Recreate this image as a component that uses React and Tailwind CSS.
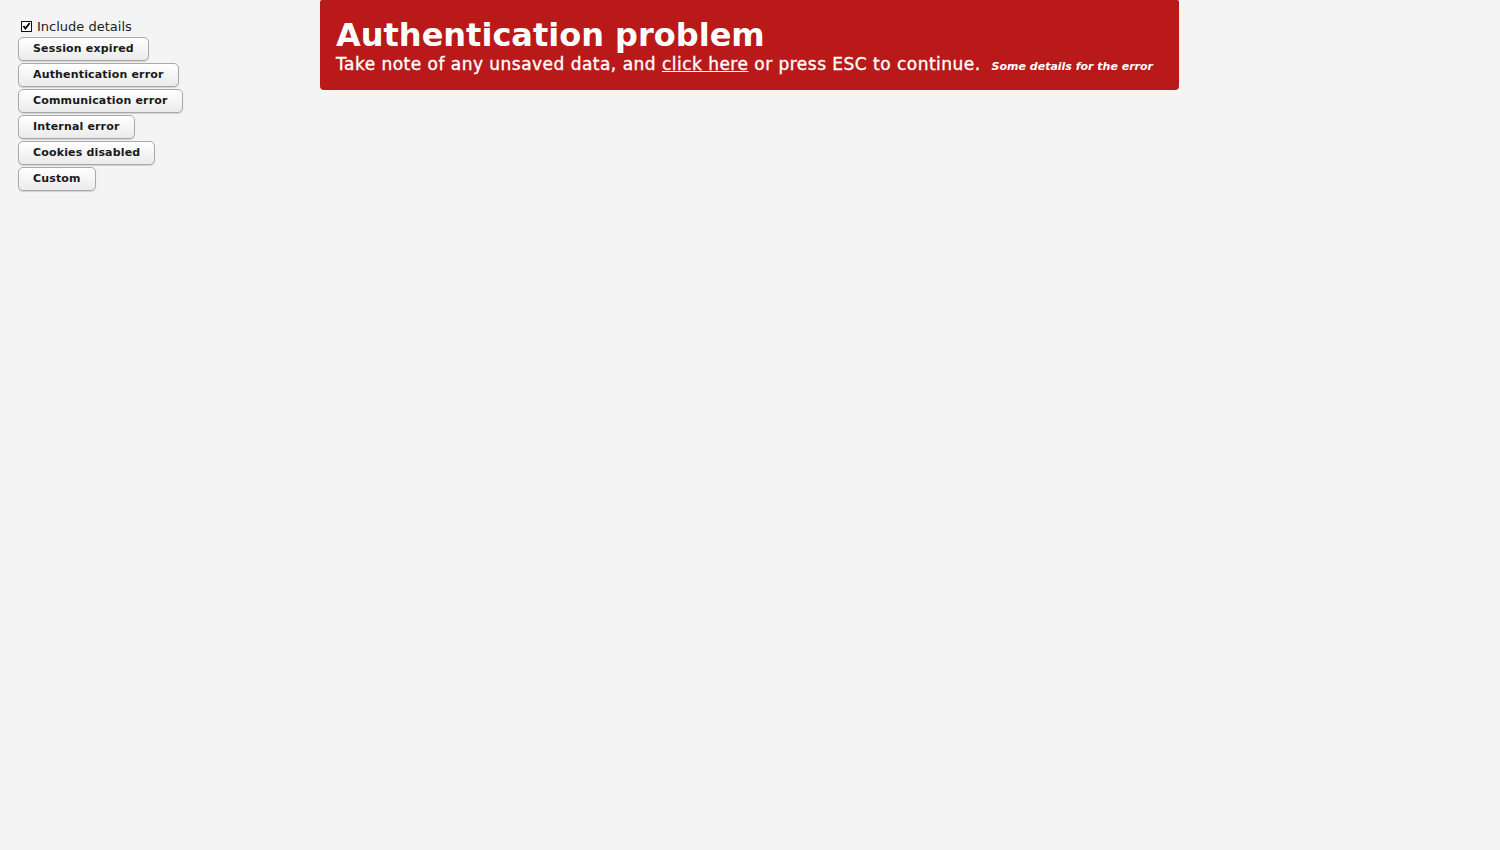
import React from 'react';

const buttons = [
  'Session expired',
  'Authentication error',
  'Communication error',
  'Internal error',
  'Cookies disabled',
  'Custom',
];

const App = () => {
  return (
    <div className="relative min-h-[850px] bg-[#f4f4f4] font-['DejaVu_Sans',sans-serif] text-[#222]">
      {/* Controls */}
      <div className="flex flex-col items-start pl-[18px] pt-[17px]">
        <label className="flex items-center gap-[5px] pl-[3px] h-[18px] text-[13px] leading-none">
          <span className="flex h-[11px] w-[11px] items-center justify-center border border-[#111] bg-white">
            <svg viewBox="0 0 11 11" className="h-[11px] w-[11px]">
              <path d="M1.8 4.8 L4.2 8 L9.4 1.2" fill="none" stroke="#000" strokeWidth="2.2" />
            </svg>
          </span>
          Include details
        </label>
        <div className="mt-[2px] flex flex-col items-start gap-[2px]">
          {buttons.map((label) => (
            <button
              key={label}
              className="h-[24px] rounded-[5px] border border-[#a9a9a9] bg-gradient-to-b from-white to-[#ebebeb] px-[14px] pb-[2px] text-[11px] font-bold leading-none tracking-[0.015em] text-[#1a1a1a] shadow-[0_1px_1px_rgba(0,0,0,0.15)]"
            >
              {label}
            </button>
          ))}
        </div>
      </div>

      {/* Notification */}
      <div className="absolute left-[320px] top-0 w-[859px] h-[90px] rounded-b-[4px] rounded-t-[2px] bg-[#b91919] px-[16px] pt-[16px] text-white">
        <div className="text-[32px] font-bold leading-[38px]">Authentication problem</div>
        <div className="flex items-baseline text-[17px] leading-[20px] tracking-[0.028em] [-webkit-text-stroke:0.35px_white]">
          <span>
            Take note of any unsaved data, and <span className="underline">click here</span> or press ESC to continue.
          </span>
          <span className="ml-[11px] text-[11px] font-bold italic tracking-normal [-webkit-text-stroke:0px]">Some details for the error</span>
        </div>
      </div>
    </div>
  );
};

export default App;
